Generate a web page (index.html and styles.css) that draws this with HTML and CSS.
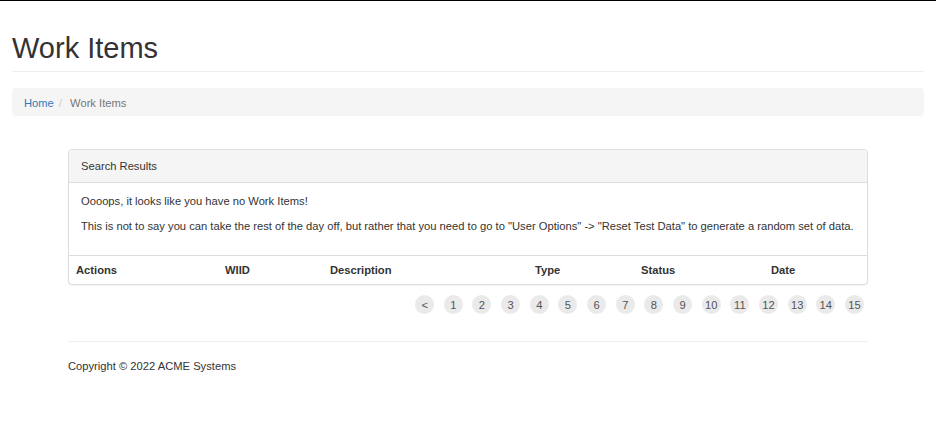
FILE: index.html
```html
<!DOCTYPE html>
<html lang="en">
<head>
<meta charset="utf-8">
<title>Work Items</title>
<link rel="stylesheet" href="styles.css">
</head>
<body>
<div class="page">
  <div class="page-header">
    <h1 class="title">Work Items</h1>
  </div>
  <ol class="breadcrumb">
    <li><a href="#">Home</a></li>
    <li class="active">Work Items</li>
  </ol>

  <div class="content">
    <div class="panel">
      <div class="panel-heading">Search Results</div>
      <div class="panel-body">
        <p>Oooops, it looks like you have no Work Items!</p>
        <p>This is not to say you can take the rest of the day off, but rather that you need to go to "User Options" -&gt; "Reset Test Data" to generate a random set of data.</p>
      </div>
      <table class="table">
        <colgroup>
          <col class="c-actions">
          <col class="c-wiid">
          <col class="c-desc">
          <col class="c-type">
          <col class="c-status">
          <col>
        </colgroup>
        <thead>
          <tr>
            <th>Actions</th>
            <th>WIID</th>
            <th>Description</th>
            <th>Type</th>
            <th>Status</th>
            <th>Date</th>
          </tr>
        </thead>
      </table>
    </div>

    <div class="pager">
      <span class="pg">&lt;</span>
      <span class="pg">1</span>
      <span class="pg">2</span>
      <span class="pg">3</span>
      <span class="pg">4</span>
      <span class="pg">5</span>
      <span class="pg">6</span>
      <span class="pg">7</span>
      <span class="pg">8</span>
      <span class="pg">9</span>
      <span class="pg">10</span>
      <span class="pg">11</span>
      <span class="pg">12</span>
      <span class="pg">13</span>
      <span class="pg">14</span>
      <span class="pg">15</span>
    </div>

    <footer class="footer">
      <p>Copyright &copy; 2022 ACME Systems</p>
    </footer>
  </div>
</div>
</body>
</html>
```

FILE: styles.css
```css
* { box-sizing: border-box; }

html, body {
  margin: 0;
  padding: 0;
  background: #fff;
}

body {
  border-top: 1px solid #000;
  font-family: "Liberation Sans", Arial, Helvetica, sans-serif;
  font-size: 11.2px;
  color: #333;
}

.page {
  padding: 0 12px;
}

.page-header {
  padding-top: 31px;
  padding-bottom: 7px;
  border-bottom: 1px solid #eee;
}

.title {
  margin: 0;
  font-size: 29px;
  font-weight: 400;
  line-height: 32px;
  color: #333;
}

.breadcrumb {
  list-style: none;
  margin: 16px 0 0;
  padding: 8px 12px 6px;
  line-height: 14px;
  background: #f5f5f5;
  border-radius: 4px;
  display: flex;
}

.breadcrumb li + li::before {
  content: "/\00a0";
  padding: 0 5px;
  color: #ccc;
}

.breadcrumb a {
  color: #337ab7;
  text-decoration: none;
}

.breadcrumb .active {
  color: #777;
}

.content {
  width: 800px;
  margin: 0 auto;
  padding-top: 33px;
}

.panel {
  border: 1px solid #ddd;
  border-radius: 4px;
  box-shadow: 0 1px 1px rgba(0, 0, 0, 0.05);
  overflow: hidden;
}

.panel-heading {
  background: #f5f5f5;
  border-bottom: 1px solid #ddd;
  padding: 9px 12px;
  line-height: 14px;
}

.panel-body {
  padding: 10px 12px 12px;
}

.panel-body p {
  margin: 0 0 8px;
  line-height: 17px;
}

.table {
  width: 100%;
  border-collapse: collapse;
  table-layout: fixed;
  border-top: 1px solid #ddd;
}

.c-actions { width: 149px; }
.c-wiid { width: 105px; }
.c-desc { width: 205px; }
.c-type { width: 106px; }
.c-status { width: 130px; }

.table th {
  text-align: left;
  font-weight: 700;
  padding: 7px 7px;
  line-height: 14px;
}

.pager {
  display: flex;
  justify-content: flex-end;
  gap: 9.67px;
  margin-top: 10px;
  padding-right: 4px;
}

.pg {
  width: 19px;
  height: 19px;
  border-radius: 50%;
  background: #eaeaea;
  color: #555;
  font-size: 11.2px;
  display: flex;
  align-items: center;
  justify-content: center;
}

.footer {
  margin-top: 27px;
  border-top: 1px solid #eee;
  padding-top: 16px;
}

.footer p {
  margin: 0;
  line-height: 17px;
}
```
